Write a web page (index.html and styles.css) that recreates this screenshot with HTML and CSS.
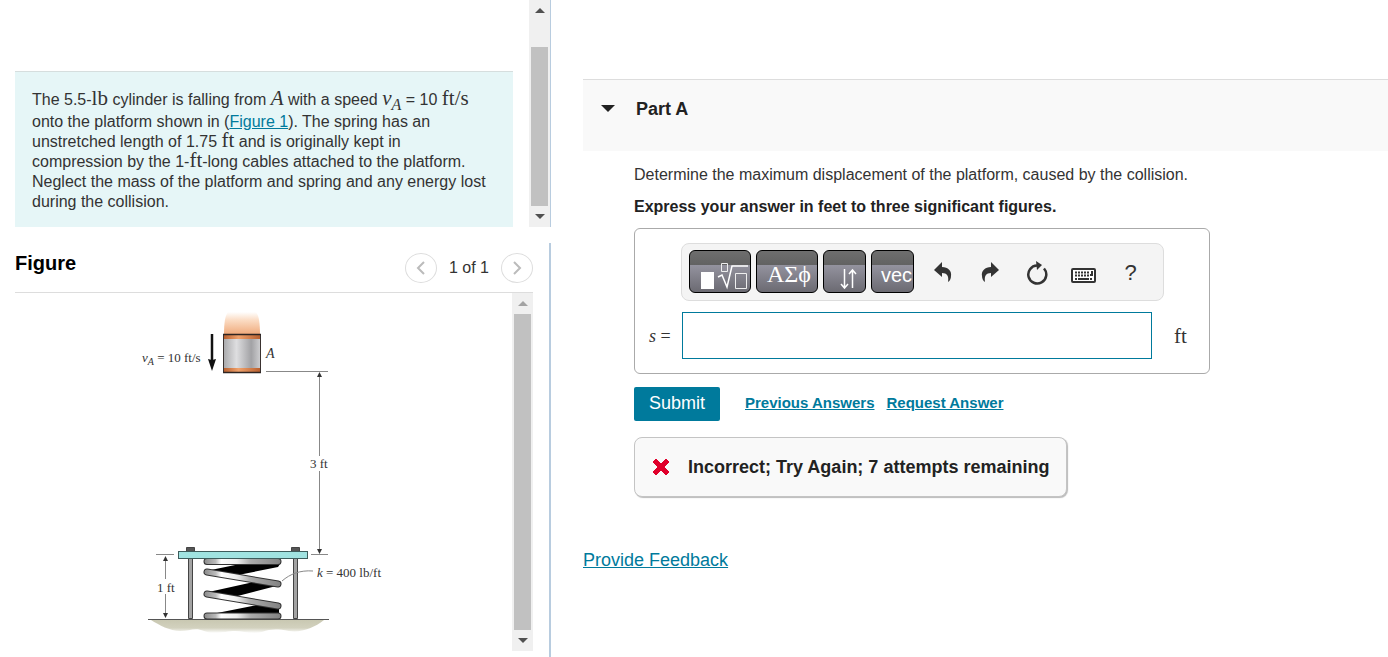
FILE: index.html
```html
<!DOCTYPE html>
<html lang="en">
<head>
  <meta charset="UTF-8">
  <meta name="viewport" content="width=device-width, initial-scale=1.0">
  <title>Part A</title>
  <link rel="stylesheet" href="styles.css">
</head>
<body>
  <div class="page">
    <aside class="left">
      <section class="intro">
        <div class="intro-body">
          <p class="problem">The 5.5-<span class="math">lb</span> cylinder is falling from <i class="math">A</i> with a speed <i class="math">v<sub>A</sub></i> = 10 <span class="math">ft/s</span> onto the platform shown in (<a href="#figure">Figure 1</a>). The spring has an unstretched length of 1.75 <span class="math">ft</span> and is originally kept in compression by the 1-<span class="math">ft</span>-long cables attached to the platform. Neglect the mass of the platform and spring and any energy lost during the collision.</p>
        </div>
        <div class="scrollbar">
          <span class="arrow up"></span>
          <span class="thumb thumb-low"></span>
          <span class="arrow down"></span>
        </div>
      </section>

      <section class="figure" id="figure">
        <header class="figure-head">
          <h2>Figure</h2>
          <nav class="pager">
            <button class="round" aria-label="Previous figure">
              <svg width="10" height="14" viewBox="0 0 10 14"><path d="M8 1 2 7l6 6"/></svg>
            </button>
            <span>1 of 1</span>
            <button class="round" aria-label="Next figure">
              <svg width="10" height="14" viewBox="0 0 10 14"><path d="m2 1 6 6-6 6"/></svg>
            </button>
          </nav>
        </header>
        <div class="figure-body">
          <div class="drawing">
            <svg width="261" height="335" viewBox="133 305 261 335" role="img" aria-label="Cylinder above a spring platform">
              <defs>
                <linearGradient id="glow" x1="0" y1="0" x2="0" y2="1">
                  <stop offset="0" stop-color="#fff"/>
                  <stop offset=".35" stop-color="#fbdcc4"/>
                  <stop offset="1" stop-color="#efa878"/>
                </linearGradient>
                <linearGradient id="steel">
                  <stop offset="0" stop-color="#a9a9ab"/>
                  <stop offset=".35" stop-color="#dedee0"/>
                  <stop offset=".75" stop-color="#a2a2a5"/>
                  <stop offset="1" stop-color="#cfcfd1"/>
                </linearGradient>
                <linearGradient id="copper">
                  <stop offset="0" stop-color="#b9602f"/>
                  <stop offset=".4" stop-color="#f0a26c"/>
                  <stop offset="1" stop-color="#b9602f"/>
                </linearGradient>
                <linearGradient id="coil" gradientUnits="userSpaceOnUse" x1="204" y1="0" x2="282" y2="0">
                  <stop offset="0" stop-color="#8a8a8a"/>
                  <stop offset=".15" stop-color="#bbb"/>
                  <stop offset=".22" stop-color="#fff"/>
                  <stop offset=".42" stop-color="#eee"/>
                  <stop offset=".6" stop-color="#aaa"/>
                  <stop offset="1" stop-color="#808080"/>
                </linearGradient>
                <linearGradient id="ground" x1="0" y1="0" x2="0" y2="1">
                  <stop offset="0" stop-color="#c9c8b2"/>
                  <stop offset=".6" stop-color="#d2d1be"/>
                  <stop offset="1" stop-color="#fff"/>
                </linearGradient>
              </defs>

              <!-- cylinder -->
              <path d="M224 335c0-12 1-19 4-23h28c3 4 4 11 4 23z" fill="url(#glow)"/>
              <rect x="223.500" y="334.500" width="37" height="38" fill="url(#steel)" stroke="#3a3230"/>
              <path d="M224 335h36v4h-36zM224 368h36v4h-36z" fill="url(#copper)"/>
              <path d="M223 334.500h38M223 372.500h38" stroke="#2e2522" stroke-width="1.500"/>
              <path d="M212 334v28" stroke="#111" stroke-width="2.500"/>
              <path d="m208 359 4 1 4-1-4 12z" fill="#111"/>
              <text x="142" y="362" font-size="13"><tspan font-style="italic">v</tspan><tspan font-style="italic" font-size="10" dy="3">A</tspan><tspan dy="-3"> = 10 ft/s</tspan></text>
              <text x="266" y="358" font-size="14" font-style="italic">A</text>

              <!-- dimensions -->
              <g stroke="#888" fill="none">
                <path d="M266 371.500h62M319.500 375v81M319.500 471v79M311 554.500h17"/>
                <path d="M156 554.500h18M165.500 558v21M165.500 594v21"/>
              </g>
              <path d="m317 377 2.500-5 2.500 5zM317 549l2.500 5 2.500-5zM163 561l2.500-5 2.500 5zM163 613l2.500 5 2.500-5z" fill="#333"/>
              <text x="310" y="468" font-size="13">3 ft</text>
              <text x="157" y="592" font-size="13">1 ft</text>

              <!-- ground -->
              <path d="M151 620h173c-10 8-23 13-35 11s-18-2-27 1-19-1-27-1-22 4-31 0-14 0-24 0-21-6-29-11z" fill="url(#ground)"/>
              <path d="M148 619.500h181" stroke="#555"/>

              <!-- cables -->
              <g fill="#a3a3a3" stroke="#444">
                <path d="M188.500 558.500h4v60h-4zM293.500 558.500h4v60h-4z"/>
                <path d="M186.500 547.500h8v4h-8zM291.500 547.500h8v4h-8z" fill="#555"/>
              </g>

              <!-- spring -->
              <path d="M280 564h-40l-34 7 22 6 50-10zM278 582l-20-1-54 12 26 5 50-13zM279 604l-22 1-50 10h72z" fill="#000"/>
              <g fill="none" stroke-linecap="round">
                <path d="M207 561.500h71M207 572l71 12M207 594l71 12M207 616h71" stroke="#333" stroke-width="7"/>
                <path d="M207 561.500l71 .01M207 572l71 12M207 594l71 12M207 616l71 .01" stroke="url(#coil)" stroke-width="5"/>
              </g>

              <rect x="178.500" y="551.500" width="129" height="7" fill="#a0e3e1" stroke="#3d5c5c"/>
              <path d="M282 581c8-7 18-11 31-10" fill="none" stroke="#888"/>
              <text x="317" y="577" font-size="13"><tspan font-style="italic">k</tspan> = 400 lb/ft</text>
            </svg>
          </div>
          <div class="scrollbar">
            <span class="arrow up muted"></span>
            <span class="thumb"></span>
            <span class="arrow down"></span>
          </div>
        </div>
      </section>
    </aside>

    <main class="right">
      <header class="part">
        <span class="caret"></span>
        <h1>Part A</h1>
      </header>

      <form class="question">
        <p>Determine the maximum displacement of the platform, caused by the collision.</p>
        <p class="hint">Express your answer in feet to three significant figures.</p>

        <div class="answer">
          <div class="toolbar">
            <button type="button" class="key wide" aria-label="Templates">
              <svg width="60" height="41" viewBox="0 0 60 41">
                <path d="M11 21h13v17H11z" fill="#fff"/>
                <path d="M31.500 12.500h6v8h-6zM45.500 22.500h11v15h-11z" fill="none" stroke="#eee"/>
                <path d="m28 26 4-2 5 12 5-21h16" fill="none" stroke="#fff" stroke-width="1.500"/>
              </svg>
            </button>
            <button type="button" class="key wide greek">ΑΣϕ</button>
            <button type="button" class="key" aria-label="Subscripts and arrows">
              <svg width="40" height="41" viewBox="0 0 40 41" fill="none" stroke="#fff" stroke-width="1.500">
                <path d="M20.500 18v19M17 33l3.500 4 3.500-4M28.500 37V19M25 23l3.500-4 3.500 4"/>
              </svg>
            </button>
            <button type="button" class="key vec">vec</button>
            <div class="tools">
              <button type="button" class="tool" aria-label="Undo">
                <svg width="20" height="24" viewBox="0 0 20 24"><path d="M1 9l8-8v5c6 0 10 4 9 9 0 2-1 5-3 6 1-6-1-9-6-9v4z"/></svg>
              </button>
              <button type="button" class="tool" aria-label="Redo">
                <svg width="20" height="24" viewBox="0 0 20 24"><path d="M19 9l-8-8v5c-6 0-10 4-9 9 0 2 1 5 3 6-1-6 1-9 6-9v4z"/></svg>
              </button>
              <button type="button" class="tool" aria-label="Reset">
                <svg width="22" height="26" viewBox="0 0 22 26"><path d="M11 5.500A9 9 0 1 0 18 8.500" fill="none" stroke="#333" stroke-width="2.500"/><path d="m10 1 6 4-5 5z"/></svg>
              </button>
              <button type="button" class="tool" aria-label="Keyboard">
                <svg width="26" height="22" viewBox="0 0 26 22">
                  <rect x="1" y="7" width="23" height="13" rx="1" fill="#fff" stroke="#333" stroke-width="2"/>
                  <path d="M4 10.500h15M4 13.500h15" fill="none" stroke="#333" stroke-width="2" stroke-dasharray="2 1"/>
                  <path d="M4 16h2v2H4zM7 16h11v2H7zM19 16h2v2h-2zM20 9h2v5h-3v-2h1z"/>
                </svg>
              </button>
              <button type="button" class="tool help" aria-label="Help">?</button>
            </div>
          </div>
          <div class="entry">
            <label for="answer"><i>s</i> =</label>
            <input type="text" id="answer">
            <span class="unit">ft</span>
          </div>
        </div>

        <div class="actions">
          <button type="submit" class="submit">Submit</button>
          <a href="#previous">Previous Answers</a>
          <a href="#request">Request Answer</a>
        </div>

        <div class="result">
          <svg width="18" height="18" viewBox="0 0 18 18"><path d="m1 4 3-3 5 5 5-5 3 3-5 5 5 5-3 3-5-5-5 5-3-3 5-5z" fill="#e0002b" stroke="#e0002b"/></svg>
          <strong>Incorrect; Try Again; 7 attempts remaining</strong>
        </div>
      </form>

      <a class="feedback" href="#feedback">Provide Feedback</a>
    </main>
  </div>
</body>
</html>
```
FILE: styles.css
```css
* {
  box-sizing: border-box;
}

body {
  margin: 0;
  background: #fff;
  color: #333;
  font: 16px/20px "Liberation Sans", Arial, sans-serif;
}

h1, h2, p {
  margin: 0;
}

a {
  color: #007a9c;
}

button {
  padding: 0;
  font-family: inherit;
  cursor: pointer;
}

svg {
  display: block;
}

.page {
  display: flex;
  min-height: 100vh;
}

/* left column */

.left {
  display: flex;
  flex-direction: column;
  flex: 0 0 551px;
}

.intro {
  display: flex;
  border-right: 1px solid #b8ccdf;
  margin-bottom: 16px;
}

.intro-body {
  flex: 1;
  padding: 71px 16px 0 15px;
}

.problem {
  padding: 18px 20px 15px 17px;
  border-top: 1px solid #d6dede;
  background: #e6f6f7;
}

.math {
  font-family: "Liberation Serif", serif;
  font-size: 21px;
  line-height: 0;
}

.math sub {
  font-size: 16px;
  line-height: 14px;
}

.scrollbar {
  display: flex;
  flex-direction: column;
  flex: 0 0 21px;
  padding: 0 2px;
  background: #f0f0f0;
}

.thumb {
  flex: 1;
  background: #c1c1c1;
}

.thumb-low {
  margin-top: 26px;
}

.arrow {
  display: flex;
  align-items: center;
  justify-content: center;
  height: 21px;
}

.arrow::before {
  content: "";
  border: 5px solid transparent;
}

.arrow.up::before {
  border-top: 0;
  border-bottom-color: #505050;
}

.arrow.down::before {
  border-bottom: 0;
  border-top-color: #505050;
}

.arrow.muted::before {
  border-bottom-color: #a3a3a3;
}

.figure {
  display: flex;
  flex-direction: column;
  flex: 1;
  padding: 0 16px 6px 15px;
  border-right: 2px solid #b8ccdf;
}

.figure-head {
  display: flex;
  align-items: center;
  justify-content: space-between;
  height: 50px;
  border-bottom: 1px solid #ddd;
}

.figure-head h2 {
  padding-bottom: 10px;
  color: #000;
  font-size: 20px;
}

.pager {
  display: flex;
  align-items: center;
  gap: 12px;
}

.round {
  display: flex;
  align-items: center;
  justify-content: center;
  width: 32px;
  height: 30px;
  border: 1px solid #ddd;
  border-radius: 50%;
  background: #fff;
}

.round path {
  fill: none;
  stroke: #bbb;
  stroke-width: 2;
}

.figure-body {
  display: flex;
  flex: 1;
}

.drawing {
  display: flex;
  justify-content: center;
  flex: 1;
  padding-top: 12px;
}

.drawing text {
  fill: #333;
  font-family: "Liberation Serif", serif;
}

/* right column */

.right {
  flex: 1;
  padding: 79px 0 0 32px;
}

.part {
  display: flex;
  align-items: center;
  gap: 21px;
  height: 72px;
  padding: 0 18px 14px;
  border-top: 1px solid #ddd;
  background: #f9f9f9;
}

.part h1 {
  color: #222;
  font-size: 18px;
}

.caret {
  border: 7px solid transparent;
  border-top-color: #222;
  border-bottom: 0;
}

.question {
  padding: 14px 16px 0 51px;
}

.hint {
  margin: 12px 0 11px;
  color: #222;
  font-weight: bold;
}

.answer {
  max-width: 576px;
  padding: 14px 20px 14px 14px;
  border: 1px solid #aaa;
  border-radius: 6px;
}

.toolbar {
  display: flex;
  align-items: center;
  gap: 5px;
  width: 483px;
  height: 58px;
  margin: 0 0 11px 32px;
  padding: 0 7px 2px;
  border: 1px solid #ddd;
  border-radius: 8px;
  background: #f4f4f4;
}

.key {
  width: 43px;
  height: 43px;
  overflow: hidden;
  border: 1px solid #000;
  border-radius: 6px;
  background: linear-gradient(#6e6e6e, #626262 34%, #93929e 35%, #6b6a72);
  color: #fff;
}

.wide {
  width: 62px;
}

.greek {
  padding: 6px 0 0 4px;
  font: 24px/28px "Liberation Serif", serif;
}

.vec {
  padding: 8px 0 0 8px;
  font-size: 20px;
}

.tools {
  display: flex;
}

.tool {
  display: flex;
  align-items: center;
  justify-content: center;
  width: 47px;
  height: 43px;
  padding-top: 4px;
  border: 0;
  background: none;
  color: #333;
}

.tool svg {
  fill: #333;
}

.help {
  font-size: 22px;
}

.entry {
  display: flex;
  align-items: center;
}

.entry label {
  flex: 0 0 33px;
  font: 18px/20px "Liberation Serif", serif;
}

.entry input {
  flex: 1;
  min-width: 0;
  height: 47px;
  padding: 0 8px;
  border: 1px solid #007a9c;
  font: inherit;
}

.unit {
  width: 15px;
  margin-left: 22px;
  font: 21px/20px "Liberation Serif", serif;
}

.actions {
  display: flex;
  align-items: center;
  gap: 12px;
  margin: 13px 0 16px;
  font-size: 15px;
  font-weight: bold;
}

.actions a {
  padding-bottom: 2px;
}

.submit {
  width: 86px;
  height: 34px;
  margin-right: 13px;
  padding-bottom: 2px;
  border: 0;
  border-radius: 2px;
  background: #007a9c;
  color: #fff;
  font-size: 18px;
}

.result {
  display: flex;
  align-items: center;
  gap: 18px;
  width: fit-content;
  height: 60px;
  padding: 0 17px;
  border: 1px solid #c4c4c4;
  border-radius: 8px;
  background: #f9f9f9;
  box-shadow: 1px 1px 1px #bbb;
  color: #222;
  font-size: 18px;
}

.feedback {
  display: inline-block;
  margin-top: 53px;
  font-size: 18px;
}
```
